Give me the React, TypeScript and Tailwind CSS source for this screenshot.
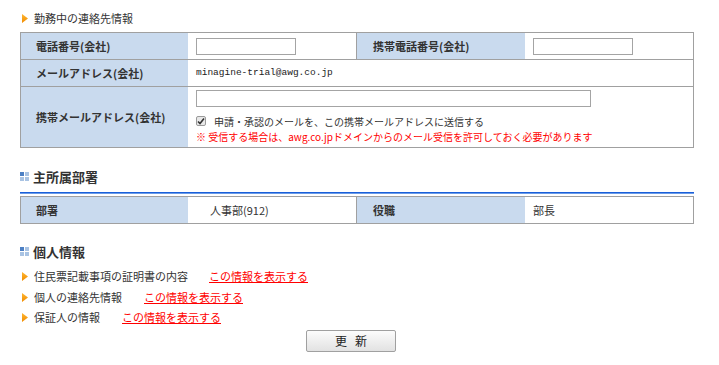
import React from 'react'

const jp = { fontFamily: '"Noto Sans CJK JP", "Noto Sans", sans-serif' }

function Arrow() {
  return (
    <svg width="6" height="9" viewBox="0 0 6 9" className="shrink-0">
      <defs>
        <linearGradient id="og" x1="0" y1="0" x2="0" y2="1">
          <stop offset="0" stopColor="#ffb733" />
          <stop offset="1" stopColor="#f08c00" />
        </linearGradient>
      </defs>
      <path d="M0 0 L6 4.5 L0 9 Z" fill="url(#og)" />
    </svg>
  )
}

function BlockIcon() {
  return (
    <div className="grid grid-cols-[4px_4px] grid-rows-[4px_4px] gap-px shrink-0">
      <div className="bg-[#4d80c4]" />
      <div className="bg-[#a9c3e3]" />
      <div className="bg-[#a9c3e3]" />
      <div className="bg-[#a9c3e3]" />
    </div>
  )
}

function Label({ w, pl, children }: { w: string; pl: string; children: React.ReactNode }) {
  return (
    <div className={`${w} ${pl} bg-[#c9daee] flex items-center text-[11px] font-bold text-[#333]`}>
      {children}
    </div>
  )
}

function TextBox({ w }: { w: string }) {
  return <div className={`${w} h-[17px] border border-[#a4a4a4] bg-white`} />
}

function Heading({ children }: { children: React.ReactNode }) {
  return (
    <div className="flex items-center h-[16px] pl-[20px] gap-[4px]">
      <BlockIcon />
      <span className="text-[13px] font-bold text-[#333] leading-none">{children}</span>
    </div>
  )
}

function InfoLink({ text, gap }: { text: string; gap: string }) {
  return (
    <div className="flex items-center h-[20px] pl-[22px] text-[11px] text-[#333]">
      <Arrow />
      <span className="ml-[6px]">{text}</span>
      <span className={`${gap} text-[#ff0000] underline`}>この情報を表示する</span>
    </div>
  )
}

export default function App() {
  return (
    <div className="w-[719px] h-[365px] bg-white overflow-hidden" style={jp}>
      <div className="flex items-center h-[12px] mt-[12px] pl-[22px] text-[11px] text-[#333]">
        <Arrow />
        <span className="ml-[6px]">勤務中の連絡先情報</span>
      </div>

      <div className="ml-[20px] mt-[8px] w-[674px] border border-[#a0a0a0]">
        <div className="flex h-[26px]">
          <Label w="w-[167px]" pl="pl-[15px]">電話番号(会社)</Label>
          <div className="w-[168px] pl-[8px] flex items-center">
            <TextBox w="w-[100px]" />
          </div>
          <div className="w-px bg-[#a0a0a0]" />
          <Label w="w-[168px]" pl="pl-[16px]">携帯電話番号(会社)</Label>
          <div className="w-[168px] pl-[8px] flex items-center">
            <TextBox w="w-[100px]" />
          </div>
        </div>
        <div className="flex h-[27px] border-t border-[#a0a0a0]">
          <Label w="w-[167px]" pl="pl-[15px]">メールアドレス(会社)</Label>
          <div
            className="flex-1 pl-[8px] flex items-center text-[9.5px] text-[#222]"
            style={{ fontFamily: '"Liberation Mono", monospace' }}
          >
            minagine-trial@awg.co.jp
          </div>
        </div>
        <div className="flex h-[61px] border-t border-[#a0a0a0]">
          <Label w="w-[167px]" pl="pl-[15px]">携帯メールアドレス(会社)</Label>
          <div className="flex-1 pl-[8px] pt-[3px] flex flex-col">
            <TextBox w="w-[395px]" />
            <div className="flex items-center mt-[7px] h-[14px] text-[10px] text-[#333]">
              <div className="w-[10px] h-[10px] border border-[#9a9a9a] bg-[#e8e8e8] rounded-[2px] flex items-center justify-center">
                <svg width="8" height="8" viewBox="0 0 8 8">
                  <path d="M1 4.5 L3 6.5 L7 1.5" stroke="#333" strokeWidth="1.6" fill="none" />
                </svg>
              </div>
              <span className="ml-[8px]">申請・承認のメールを、この携帯メールアドレスに送信する</span>
            </div>
            <div className="h-[14px] mt-[1px] flex items-center text-[10px] text-[#ff0000]">
              ※ 受信する場合は、awg.co.jpドメインからのメール受信を許可しておく必要があります
            </div>
          </div>
        </div>
      </div>

      <div className="mt-[20px]">
        <Heading>主所属部署</Heading>
      </div>
      <div className="ml-[20px] mt-[8px] w-[674px] h-[2px] border-t border-[#1a5fd9] bg-[#6a9be8]" />
      <div className="ml-[20px] mt-[2px] w-[674px] border border-[#a0a0a0]">
        <div className="flex h-[26px]">
          <Label w="w-[167px]" pl="pl-[15px]">部署</Label>
          <div className="w-[168px] pl-[22px] flex items-center text-[11px] text-[#333]">人事部(912)</div>
          <div className="w-px bg-[#a0a0a0]" />
          <Label w="w-[168px]" pl="pl-[16px]">役職</Label>
          <div className="w-[168px] pl-[8px] flex items-center text-[11px] text-[#333]">部長</div>
        </div>
      </div>

      <div className="mt-[19px]">
        <Heading>個人情報</Heading>
      </div>
      <div className="mt-[7px] flex flex-col">
        <InfoLink text="住民票記載事項の証明書の内容" gap="ml-[21px]" />
        <div className="h-[1px]" />
        <InfoLink text="個人の連絡先情報" gap="ml-[22px]" />
        <InfoLink text="保証人の情報" gap="ml-[22px]" />
      </div>

      <div className="mt-[3px] ml-[306px] w-[90px] h-[22px] border border-[#a0a0a0] rounded-[2px] bg-gradient-to-b from-[#fcfcfc] to-[#e2e2e2] flex items-center justify-center text-[12px] text-[#222] tracking-[8px] pl-[8px]">
        更新
      </div>
    </div>
  )
}
